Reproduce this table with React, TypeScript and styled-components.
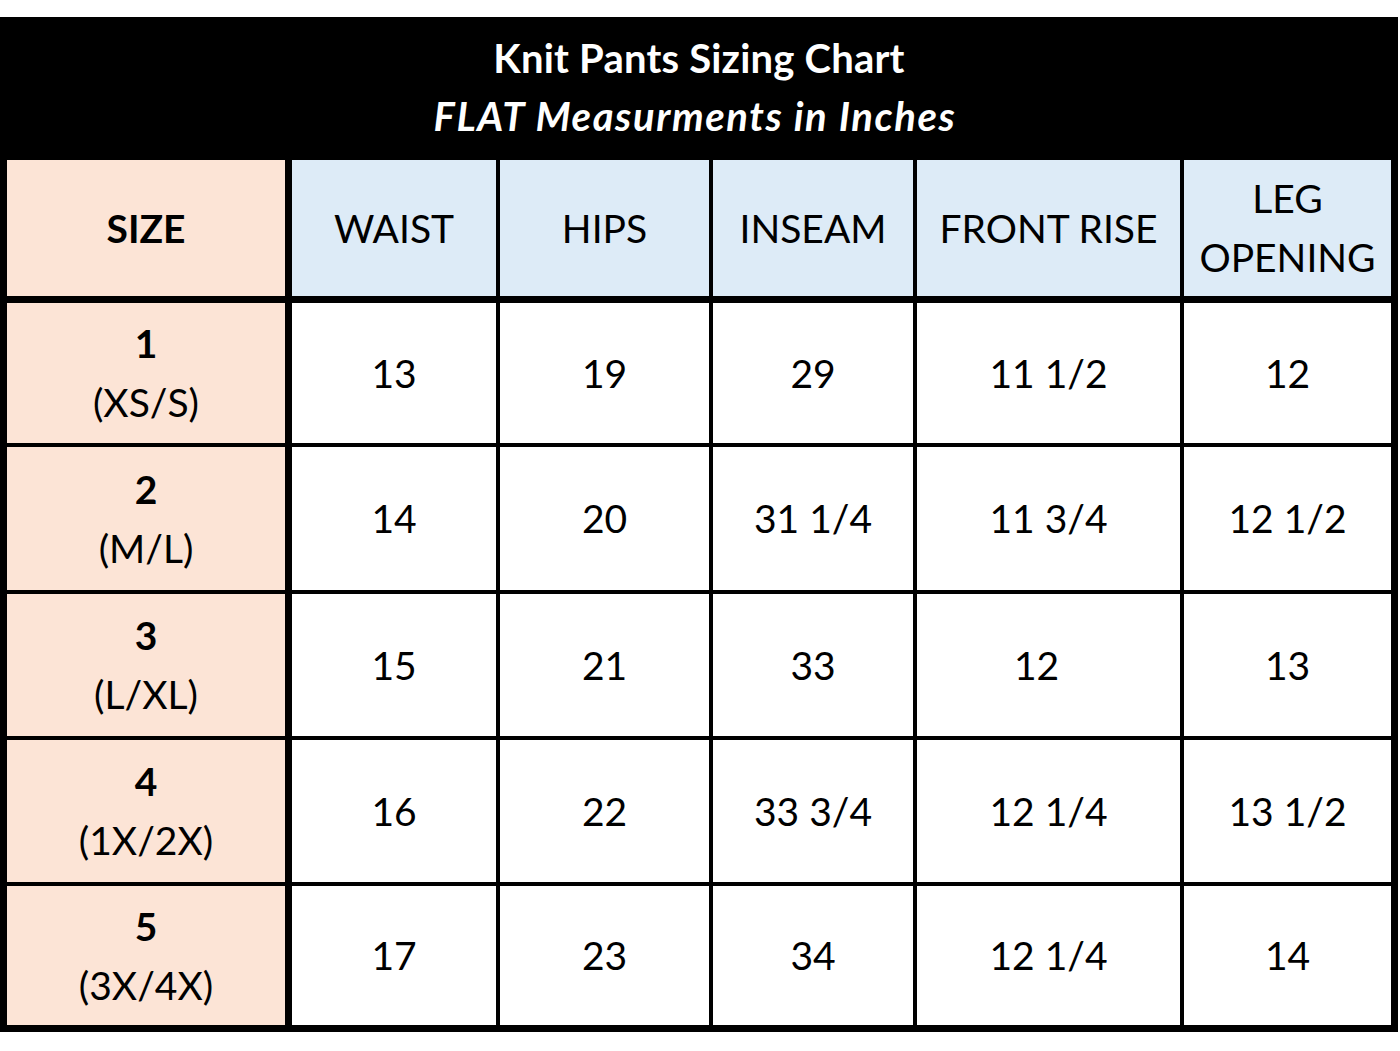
import React from 'react';
import styled, { createGlobalStyle } from 'styled-components';

// ! data
const columns = ['WAIST', 'HIPS', 'INSEAM', 'FRONT RISE', 'LEG OPENING'];

const rows = [
  { num: '1', label: '(XS/S)', values: ['13', '19', '29', '11 1/2', '12'] },
  { num: '2', label: '(M/L)', values: ['14', '20', '31 1/4', '11 3/4', '12 1/2'] },
  { num: '3', label: '(L/XL)', values: ['15', '21', '33', '12', '13'] },
  { num: '4', label: '(1X/2X)', values: ['16', '22', '33 3/4', '12 1/4', '13 1/2'] },
  { num: '5', label: '(3X/4X)', values: ['17', '23', '34', '12 1/4', '14'] },
];

// ! global
const GlobalStyle = createGlobalStyle`
  html, body {
    margin: 0;
    padding: 0;
    background: #ffffff;
  }
  body {
    font-family: Lato, 'Open Sans', 'Noto Sans', sans-serif;
    color: #000;
  }
`;

// ! styled components
const Page = styled.div`
  padding-top: 17px;
  width: 1400px;
  height: 1034px;
`;

const Chart = styled.div`
  width: 1398px;
  box-sizing: border-box;
  background: #000;
  padding: 0 7px 7px;
`;

const Title = styled.div`
  height: 143px;
  display: flex;
  flex-direction: column;
  align-items: center;
  justify-content: center;
  color: #fff;
  font-weight: 700;
  font-size: 40px;
  line-height: 58px;
  padding-bottom: 4px;
  box-sizing: border-box;
`;

const TitleLine = styled.div<{ $italic?: boolean }>`
  font-style: ${(p) => (p.$italic ? 'italic' : 'normal')};
  letter-spacing: ${(p) => (p.$italic ? '1.6px' : '0.2px')};
  margin-right: ${(p) => (p.$italic ? '8px' : '0')};
`;

const Grid = styled.div`
  display: grid;
  grid-template-columns: 281px 204px 209px 200px 263px 207px;
  grid-template-rows: 139px 140px 143px 142px 142px 139px;
  column-gap: 4px;
  row-gap: 4px;
`;

const Cell = styled.div<{ $tone: 'size' | 'head' | 'body'; $first?: boolean; $head?: boolean }>`
  display: flex;
  flex-direction: column;
  align-items: center;
  justify-content: center;
  text-align: center;
  font-size: 39px;
  line-height: 59px;
  background: ${(p) =>
    p.$tone === 'size' ? '#fce4d6' : p.$tone === 'head' ? '#ddebf7' : '#ffffff'};
  margin-right: ${(p) => (p.$first ? '3px' : '0')};
  margin-bottom: ${(p) => (p.$head ? '3px' : '0')};
  padding-bottom: 0;
  box-sizing: border-box;
`;

const Strong = styled.div`
  font-weight: 700;
`;

const Value = styled.span<{ $shift?: number }>`
  position: relative;
  left: ${(p) => p.$shift || 0}px;
`;

const App = () => {
  return (
    <Page>
      <GlobalStyle />
      <Chart>
        {/* title */}
        <Title>
          <TitleLine>Knit Pants Sizing Chart</TitleLine>
          <TitleLine $italic>FLAT Measurments in Inches</TitleLine>
        </Title>

        {/* table */}
        <Grid>
          <Cell $tone="size" $first $head>
            <Strong>SIZE</Strong>
          </Cell>
          {columns.map((c) => (
            <Cell key={c} $tone="head" $head>
              {c === 'LEG OPENING' ? (
                <>
                  <div>LEG</div>
                  <div>OPENING</div>
                </>
              ) : (
                c
              )}
            </Cell>
          ))}

          {rows.map((r) => (
            <React.Fragment key={r.num}>
              <Cell $tone="size" $first>
                <Strong>{r.num}</Strong>
                <div>{r.label}</div>
              </Cell>
              {r.values.map((v, i) => (
                <Cell key={i} $tone="body">
                  {/* the lone 12 sits a little left of centre */}
                  <Value $shift={i === 3 && v === '12' ? -12 : 0}>{v}</Value>
                </Cell>
              ))}
            </React.Fragment>
          ))}
        </Grid>
      </Chart>
    </Page>
  );
};

export default App;
